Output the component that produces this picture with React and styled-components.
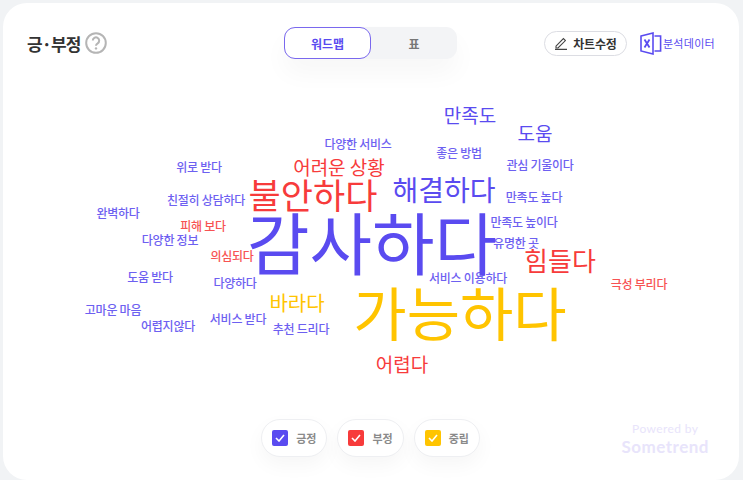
import React from 'react';
import styled, { createGlobalStyle } from 'styled-components';

const Global = createGlobalStyle`
  html, body { margin: 0; padding: 0; height: 480px; overflow: hidden; background: #f1f3f5; }
  * { box-sizing: border-box; }
  body { font-family: "Noto Sans CJK KR", "Noto Sans", sans-serif; }
`;
const Card = styled.div`
  margin: 3px 4px 0 3px; height: 477px; background: #fff; border-radius: 24px;
  display: flex; flex-direction: column; overflow: hidden;
`;
const Header = styled.header`
  display: grid; grid-template-columns: 1fr 173px 1fr; align-items: center;
  height: 32px; margin-top: 24px; padding: 0 25px 0 24px;
`;
const TitleWrap = styled.div`display: flex; align-items: center; gap: 5px;`;
const Title = styled.h2`margin: 0; font-size: 17px; font-weight: 700; color: #333; letter-spacing: -0.9px;`;
const Tabs = styled.div`
  display: flex; height: 32px; background: #f3f4f6; border-radius: 11px;
  box-shadow: 0 14px 26px rgba(0,0,0,0.035);
`;
const Tab = styled.button`
  width: ${p => p.$active ? 87 : 86}px; height: 32px; padding: 0; border-radius: 11px; font: inherit; font-size: 12px; font-weight: 700;
  background: ${p => p.$active ? '#fff' : 'transparent'};
  color: ${p => p.$active ? '#5a4bf0' : '#777'};
  border: ${p => p.$active ? '1.5px solid #7a68ee' : 'none'};
`;
const Actions = styled.div`display: flex; justify-content: flex-end; align-items: center; margin-right: -1px;`;
const EditButton = styled.button`
  display: flex; align-items: center; justify-content: center; gap: 5px; width: 83px; height: 25px; padding: 0;
  background: #fff; border: 1px solid #dcdde3; border-radius: 13px; font: inherit; font-size: 12px; font-weight: 700; color: #333; letter-spacing: -0.2px;
`;
const DataLink = styled.div`
  display: flex; align-items: center; margin-left: 13px; gap: 1px; font-size: 11px; color: #5a4bf0; letter-spacing: 0.3px;
`;
const Cloud = styled.div`position: relative; height: 330px; margin-top: 21px;`;
const Word = styled.span`
  position: absolute; left: ${p => p.$x - 3}px; top: ${p => p.$y - 80}px; transform: translate(-50%, -50%);
  font-size: ${p => p.$size}px; line-height: 1; white-space: nowrap; color: ${p => p.$color};
  font-weight: ${p => p.$size < 14 ? 500 : 400};
  letter-spacing: ${p => p.$size < 14 ? '-0.25px' : '0'};
  opacity: ${p => p.$size < 14 ? 0.88 : 1};
`;
const Footer = styled.footer`
  display: grid; grid-template-columns: 1fr auto 1fr; align-items: start; margin-top: 9px; padding-right: 1px;
`;
const Legend = styled.div`display: flex; gap: 10px; grid-column: 2;`;
const Pill = styled.div`
  display: flex; align-items: center; gap: 8px; height: 38px; padding: 0 10px; border-radius: 19px; background: #fff;
  border: 1px solid #eeeff2; box-shadow: 0 8px 20px rgba(0,0,0,0.04);
  font-size: 11px; font-weight: 700; color: #8a8a8a;
`;
const Check = styled.span`
  display: flex; align-items: center; justify-content: center; width: 16px; height: 16px; border-radius: 2px; background: ${p => p.$color};
`;
const Brand = styled.div`
  justify-self: end; display: flex; flex-direction: column; align-items: center; color: #e8e4fb; margin: 2px 29px 0 0;
  font-family: "Lato", sans-serif;
`;
const Powered = styled.span`font-size: 12px; line-height: 16px; letter-spacing: 0.4px;`;
const Some = styled.span`font-size: 17px; line-height: 20px; font-weight: 700; letter-spacing: 0.5px;`;

const P = '#5a4bf0', R = '#f73b3b', Y = '#ffc400';
const words = [
  ['만족도', 470, 114, 19, P], ['도움', 535, 132, 19, P], ['다양한 서비스', 358, 144, 12, P],
  ['좋은 방법', 459, 153, 12, P], ['관심 기울이다', 540, 165, 12, P], ['위로 받다', 199, 167, 12, P],
  ['어려운 상황', 339, 166, 19, R], ['해결하다', 444, 189, 28, P], ['불안하다', 313, 193, 35, R],
  ['만족도 높다', 534, 197, 12, P], ['친절히 상담하다', 206, 200, 12, P], ['완벽하다', 118, 213, 12, P],
  ['피해 보다', 203, 226, 12, R], ['만족도 높이다', 524, 222, 12, P], ['감사하다', 372, 241, 68, P],
  ['다양한 정보', 170, 240, 12, P], ['유명한 곳', 516, 243, 12, P], ['의심되다', 232, 256, 12, R],
  ['힘들다', 560, 260, 26, R], ['도움 받다', 150, 277, 12, P], ['다양하다', 235, 283, 12, P],
  ['서비스 이용하다', 468, 278, 12, P], ['극성 부리다', 639, 284, 12, R], ['바라다', 297, 303, 20, Y],
  ['가능하다', 460, 311, 58, Y], ['고마운 마음', 113, 310, 12, P], ['어렵지않다', 168, 326, 12, P],
  ['서비스 받다', 238, 319, 12, P], ['추천 드리다', 301, 329, 12, P], ['어렵다', 402, 363, 19, R],
];
const legend = [['긍정', P], ['부정', R], ['중립', Y]];

const Help = () => (
  <svg width="22" height="22" viewBox="0 0 22 22" fill="none">
    <circle cx="11" cy="11" r="9.8" stroke="#b5b5b5" strokeWidth="2" />
    <path d="M7.8 8.6a3.2 3.2 0 1 1 4.9 2.7c-1.1.7-1.7 1.2-1.7 2.4" stroke="#b5b5b5" strokeWidth="2" />
    <circle cx="11" cy="16.4" r="1.2" fill="#b5b5b5" />
  </svg>
);
const Pencil = () => (
  <svg width="14" height="14" viewBox="0 0 14 14" fill="none" stroke="#444" strokeWidth="1.1">
    <path d="M2 10.2 9.4 2.6l2 2L4 12H2z" />
    <path d="M1 13.4h12" />
  </svg>
);
const ExcelMark = () => (
  <svg width="22" height="23" viewBox="0 0 22 23" fill="none" stroke="#5a4bf0" strokeWidth="1.6">
    <path d="M1 4 13 1v21L1 19z" />
    <path d="M14.5 4H20.6V19H14.5" />
    <path d="M4.5 7.5 9.5 15.5M9.5 7.5 4.5 15.5" strokeWidth="1.8" />
  </svg>
);
const Tick = () => (
  <svg width="10" height="8" viewBox="0 0 10 8" fill="none" stroke="#fff" strokeWidth="1.6">
    <path d="M1 4l3 3 5-6" />
  </svg>
);

export default function App() {
  return (
    <>
      <Global />
      <Card>
        <Header>
          <TitleWrap>
            <Title>긍·부정</Title>
            <Help />
          </TitleWrap>
          <Tabs>
            <Tab $active>워드맵</Tab>
            <Tab>표</Tab>
          </Tabs>
          <Actions>
            <EditButton><Pencil />차트수정</EditButton>
            <DataLink><ExcelMark />분석데이터</DataLink>
          </Actions>
        </Header>
        <Cloud>
          {words.map(([t, x, y, s, c]) => (
            <Word key={t} $x={x} $y={y} $size={s} $color={c}>{t}</Word>
          ))}
        </Cloud>
        <Footer>
          <Legend>
            {legend.map(([t, c]) => (
              <Pill key={t}><Check $color={c}><Tick /></Check>{t}</Pill>
            ))}
          </Legend>
          <Brand>
            <Powered>Powered by</Powered>
            <Some>Sometrend</Some>
          </Brand>
        </Footer>
      </Card>
    </>
  );
}
